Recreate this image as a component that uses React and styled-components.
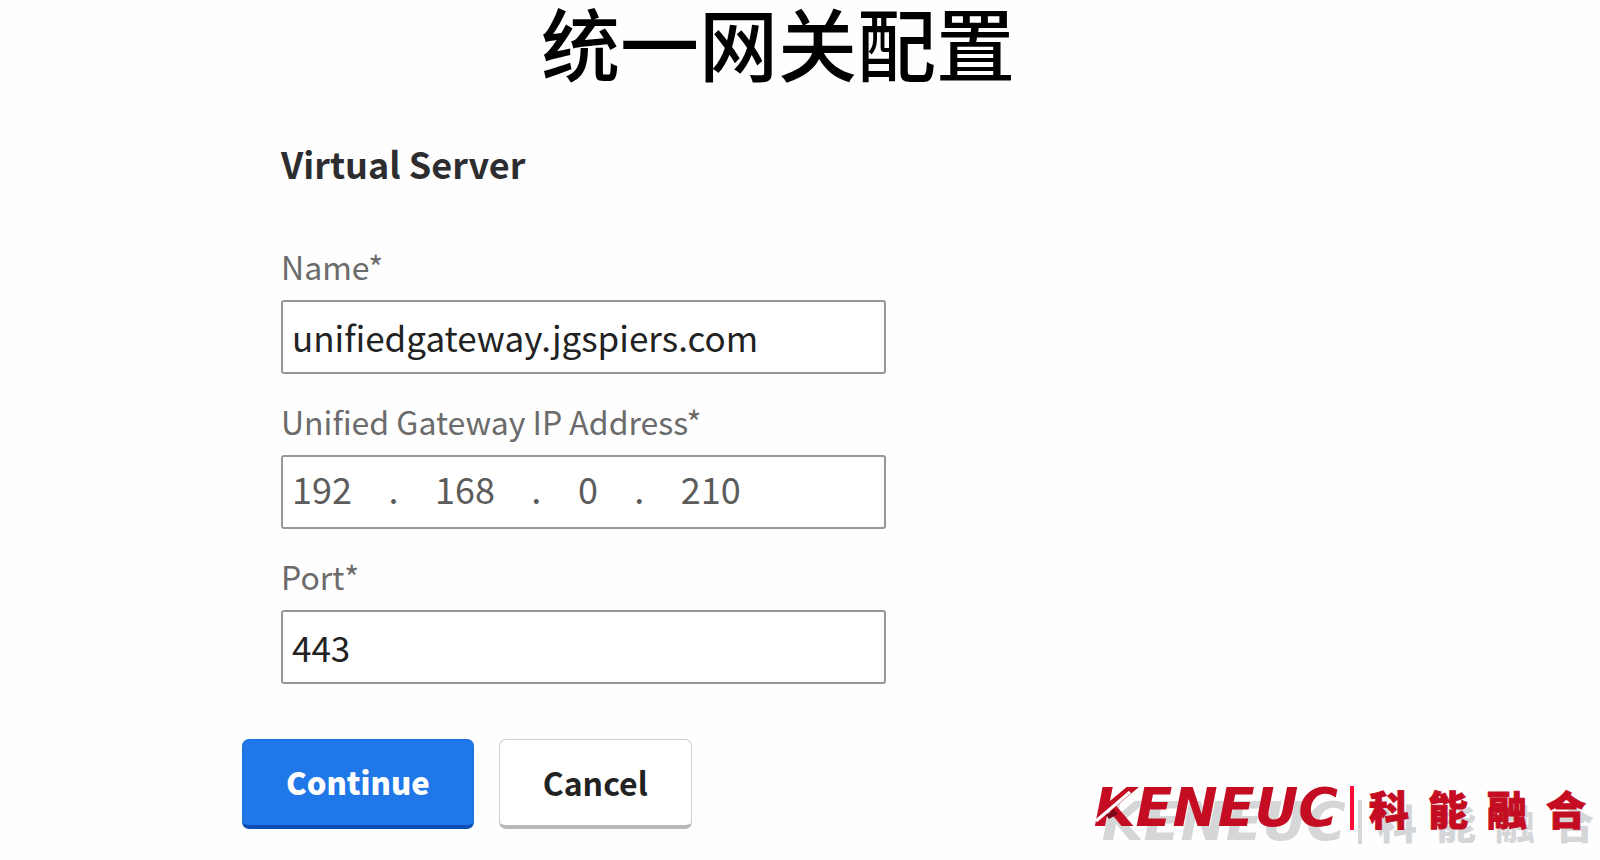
import React from 'react';
import styled, { createGlobalStyle } from 'styled-components';

const GlobalStyle = createGlobalStyle`
  *, *::before, *::after { box-sizing: border-box; }
  body {
    margin: 0;
    background: #fefefe;
    color: #222;
    font-family: "Noto Sans CJK SC", "Noto Sans", sans-serif;
  }
`;

const Page = styled.main`
  display: flex;
  flex-direction: column;
`;

const Title = styled.h1`
  margin: 0;
  padding-right: 44px;
  text-align: center;
  font-family: "Liberation Sans", "Noto Sans CJK SC", sans-serif;
  font-size: 79px;
  font-weight: 500;
  line-height: 98px;
  color: #000;
`;

const Form = styled.form`
  display: flex;
  flex-direction: column;
  gap: 55px;
  padding: 41px 0 16px 242px;
`;

const Section = styled.section`
  display: flex;
  flex-direction: column;
  gap: 27px;
  width: 100%;
  max-width: 644px;
  padding-left: 39px;
`;

const SectionTitle = styled.h2`
  margin: 0 0 32px;
  font-size: 36px;
  font-weight: 700;
  line-height: 48px;
  color: #2d2d2f;
`;

const Field = styled.div`
  display: flex;
  flex-direction: column;
  gap: 14px;
`;

const Label = styled.label`
  font-size: 32px;
  line-height: 40px;
  color: #6b6b6b;
`;

const TextInput = styled.input`
  width: 100%;
  height: 74px;
  padding: 0 9px 2px;
  border: 2px solid #979797;
  border-radius: 3px;
  background: #fff;
  font: inherit;
  font-size: 35px;
  color: #222;
`;

const AddressBox = styled.div`
  display: flex;
  align-items: center;
  height: 74px;
  padding: 0 8px 8px;
  border: 2px solid #979797;
  border-radius: 3px;
  background: #fff;
  font-size: 36px;
  color: #5c5c5c;
`;

const Octet = styled.input`
  width: ${({ $digits }) => $digits}ch;
  box-sizing: content-box;
  padding: 0 1px;
  border: 0;
  background: none;
  font: inherit;
  color: inherit;
`;

const Dot = styled.span`
  width: 81px;
  text-align: center;
`;

const BottomRow = styled.div`
  display: flex;
  align-items: flex-start;
  justify-content: space-between;
  padding-right: 14px;
`;

const Actions = styled.div`
  display: flex;
  gap: 25px;
`;

const Button = styled.button`
  height: 90px;
  padding: 0 43px 2px;
  border: 1px solid ${({ $primary }) => ($primary ? '#1c6fdc' : '#cfcfcf')};
  border-bottom: 4px solid ${({ $primary }) => ($primary ? '#0b4fb3' : '#b9b9b9')};
  border-radius: 7px;
  background: ${({ $primary }) => ($primary ? '#2077e8' : '#fff')};
  color: ${({ $primary }) => ($primary ? '#fff' : '#222')};
  font: inherit;
  font-size: ${({ $primary }) => ($primary ? 31 : 32)}px;
  font-weight: ${({ $primary }) => ($primary ? 900 : 700)};
`;

const Brand = styled.div`
  display: flex;
  align-items: center;
  height: 44px;
  margin-top: 47px;
  color: #c40d23;
  text-shadow: 8px 14px 0 #d5d6d8;
`;

const Wordmark = styled.span`
  position: relative;
  font-family: "DejaVu Sans", sans-serif;
  font-size: 54px;
  font-weight: 700;
  font-style: italic;
  line-height: 44px;
`;

const Fold = styled.svg`
  position: absolute;
  left: 0;
  top: 4px;
`;

const Divider = styled.span`
  width: 4px;
  height: 44px;
  margin: 0 15px 0 12px;
  background: #ff0b35;
  box-shadow: 8px 14px 0 #d5d6d8;
`;

const BrandName = styled.span`
  display: flex;
  gap: 19px;
  font-size: 40px;
  font-weight: 900;
  line-height: 44px;
  -webkit-text-stroke: 1px #c40d23;
`;

const ADDRESS = ['192', '168', '0', '210'];

export default function App() {
  return (
    <>
      <GlobalStyle />
      <Page>
        <Title>统一网关配置</Title>
        <Form onSubmit={(e) => e.preventDefault()}>
          <Section>
            <SectionTitle>Virtual Server</SectionTitle>
            <Field>
              <Label htmlFor="name">Name*</Label>
              <TextInput id="name" defaultValue="unifiedgateway.jgspiers.com" />
            </Field>
            <Field>
              <Label htmlFor="octet-0">Unified Gateway IP Address*</Label>
              <AddressBox>
                {ADDRESS.map((value, i) => (
                  <React.Fragment key={i}>
                    {i > 0 && <Dot>.</Dot>}
                    <Octet
                      id={`octet-${i}`}
                      aria-label={`IP address part ${i + 1}`}
                      $digits={value.length}
                      defaultValue={value}
                    />
                  </React.Fragment>
                ))}
              </AddressBox>
            </Field>
            <Field>
              <Label htmlFor="port">Port*</Label>
              <TextInput id="port" defaultValue="443" />
            </Field>
          </Section>
          <BottomRow>
            <Actions>
              <Button type="submit" $primary>Continue</Button>
              <Button type="button">Cancel</Button>
            </Actions>
            <Brand>
              <Wordmark>
                KENEUC
                <Fold width="44" height="40" viewBox="0 0 44 40" aria-hidden="true">
                  <path d="M2 31 L36 2" stroke="#fefefe" strokeWidth="3" />
                  <path d="M12 25 L20 19 L24 24 L15 29 Z" fill="#7c0618" />
                </Fold>
              </Wordmark>
              <Divider />
              <BrandName>
                {[...'科能融合'].map((char) => (
                  <span key={char}>{char}</span>
                ))}
              </BrandName>
            </Brand>
          </BottomRow>
        </Form>
      </Page>
    </>
  );
}
